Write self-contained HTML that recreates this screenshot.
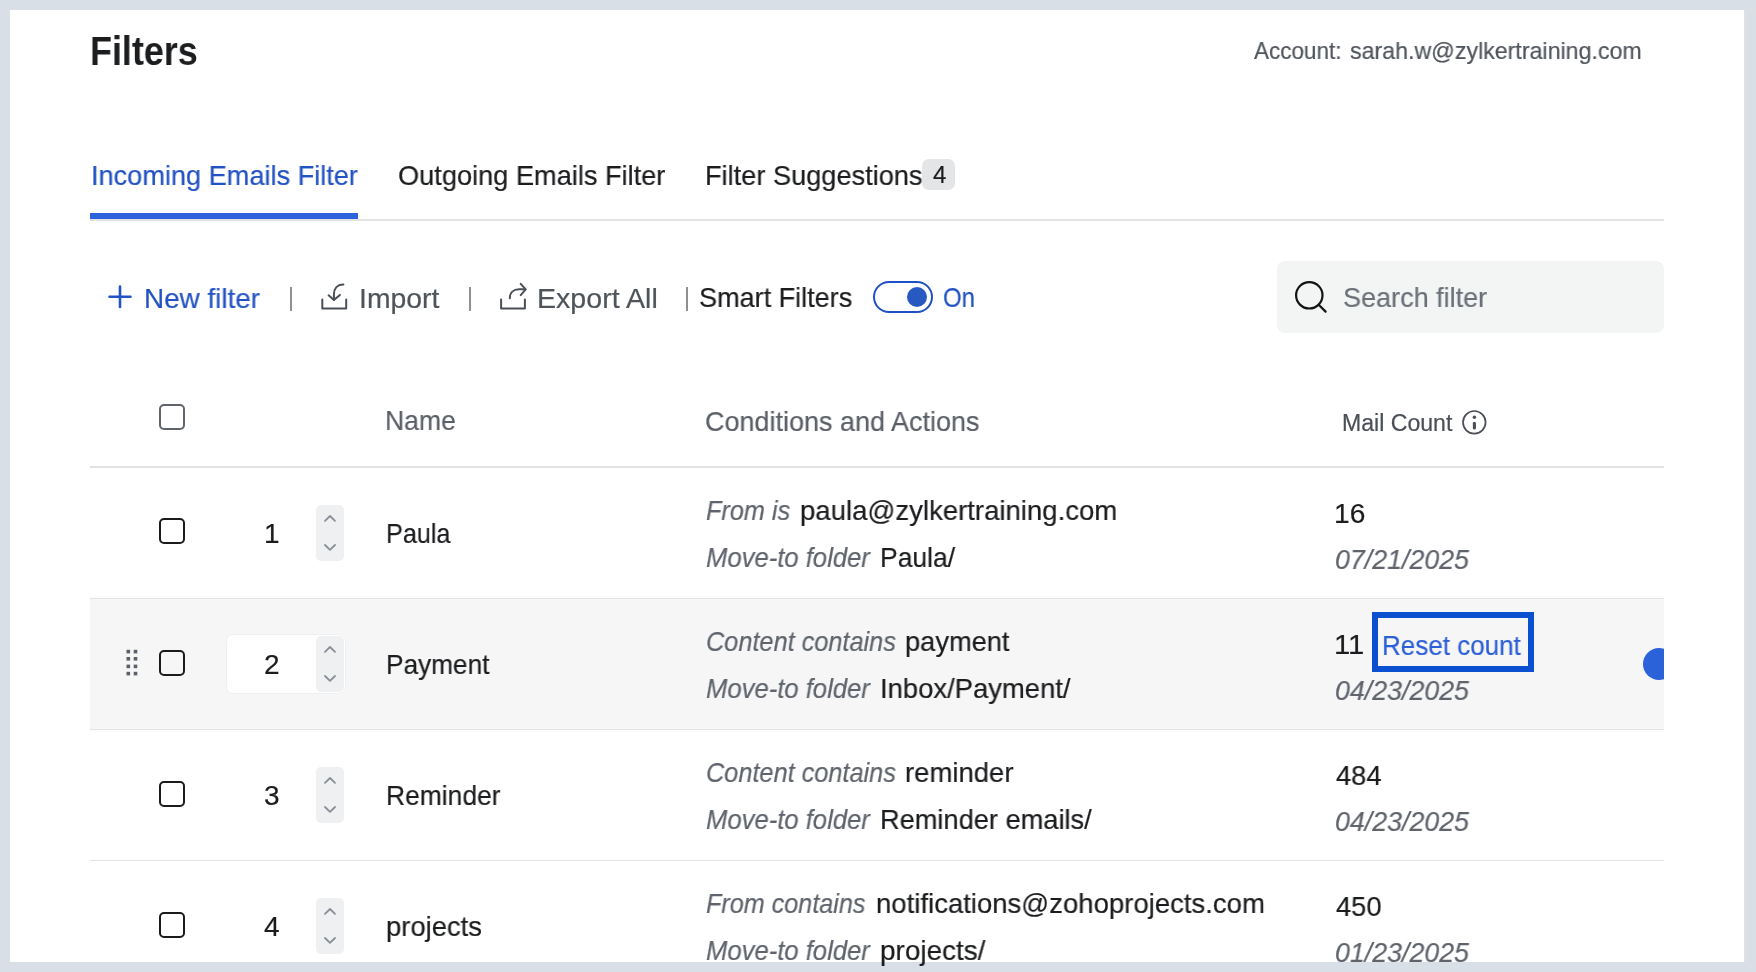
<!DOCTYPE html>
<html><head><meta charset="utf-8"><title>Filters</title>
<style>
html,body{margin:0;padding:0;}
body{width:1756px;height:972px;background:#d8dfe6;position:relative;overflow:hidden;font-family:"Liberation Sans",sans-serif;}
.panel{position:absolute;left:10px;top:10px;width:1734px;height:952px;background:#fff;border-right:2px solid #dfe1e5;}
.t{position:absolute;white-space:nowrap;line-height:1;transform-origin:0 0;will-change:transform;}
.a{position:absolute;}
.cb{position:absolute;left:159px;width:22px;height:22px;border:2px solid #1b1b1d;border-radius:5px;}
.step{position:absolute;left:316px;width:28px;height:56px;background:#eff0f2;border-radius:5px;}
.sep{position:absolute;top:287px;width:2px;height:24px;background:#8f9092;}
.rowline{position:absolute;left:90px;width:1574px;height:1px;background:#e2e3e6;}
svg{position:absolute;overflow:visible;}
</style></head><body>
<div class="panel"></div>

<div class="a" style="left:90px;top:219px;width:1574px;height:2px;background:#e1e3e5"></div>
<div class="a" style="left:90px;top:213px;width:268px;height:6px;background:#2d64db"></div>
<div class="a" style="left:922px;top:159px;width:33px;height:31px;border-radius:7px;background:#e4e5e7"></div>
<svg style="left:100px;top:280px" width="40" height="35" viewBox="0 0 40 35"><path d="M20 6.5V27M9.5 16.7H30.5" stroke="#2352c2" stroke-width="2.6" stroke-linecap="round" fill="none"/></svg>
<div class="sep" style="left:290px"></div>
<div class="sep" style="left:469px"></div>
<div class="sep" style="left:686px"></div>
<svg style="left:315px;top:278px" width="40" height="40" viewBox="0 0 40 40"><g stroke="#4a4f57" stroke-width="2" fill="none" stroke-linecap="round" stroke-linejoin="round"><path d="M7.3 21.4V30.5H31.2V21.4"/><path d="M28.4 6.4C22 6.4 18.9 11 18.9 16.5V21.8"/><path d="M13.6 17.3L18.9 22L24.9 16.9"/></g></svg>
<svg style="left:494px;top:278px" width="40" height="40" viewBox="0 0 40 40"><g stroke="#4a4f57" stroke-width="2" fill="none" stroke-linecap="round" stroke-linejoin="round"><path d="M7.1 21.4V30.5H30.9V21.4"/><path d="M15.8 20.2C15.8 14.5 19.5 11.3 25 11.3H31.3"/><path d="M26.7 5.8L31.7 11.3L26.7 17.1"/></g></svg>
<div class="a" style="left:873px;top:281px;width:56px;height:28px;border:2px solid #1f4fc4;border-radius:16px"></div>
<div class="a" style="left:907px;top:287px;width:20px;height:20px;border-radius:50%;background:#2859c0"></div>
<div class="a" style="left:1277px;top:261px;width:387px;height:72px;border-radius:8px;background:#f3f4f4"></div>
<svg style="left:1290px;top:277px" width="40" height="40" viewBox="0 0 40 40"><g stroke="#141414" stroke-width="2.2" fill="none" stroke-linecap="round"><circle cx="19.3" cy="18.3" r="13.2"/><path d="M29.2 28.2L35.6 34.6"/></g></svg>
<div class="cb" style="top:404px;border-color:#60656c"></div>
<svg style="left:1455px;top:405px" width="40" height="40" viewBox="0 0 40 40"><circle cx="19.3" cy="17.3" r="11.3" stroke="#4a4f57" stroke-width="1.7" fill="none"/><circle cx="19.4" cy="12.3" r="1.7" fill="#4a4f57"/><path d="M19.4 18.3V22.9" stroke="#4a4f57" stroke-width="3.1" stroke-linecap="round"/></svg>
<div class="a" style="left:90px;top:466px;width:1574px;height:2px;background:#e1e2e5"></div>
<div class="a" style="left:90px;top:599px;width:1574px;height:130px;background:#f6f6f7"></div>
<div class="rowline" style="top:598px"></div>
<div class="cb" style="top:518px"></div>
<div class="step" style="top:505px"></div>
<svg style="left:316px;top:505px" width="28" height="56" viewBox="0 0 28 56"><g stroke="#8a8e96" stroke-width="1.8" fill="none" stroke-linecap="round" stroke-linejoin="round"><path d="M9 15.9L14 11L19 15.9"/><path d="M9 40L14 44.9L19 40"/></g></svg>
<div class="rowline" style="top:729px"></div>
<div class="cb" style="top:650px"></div>
<div class="a" style="left:226px;top:634px;width:118px;height:58px;background:#fff;border:1px solid #f0f0f2;border-radius:7px"></div>
<div class="step" style="top:636px"></div>
<svg style="left:316px;top:636px" width="28" height="56" viewBox="0 0 28 56"><g stroke="#8a8e96" stroke-width="1.8" fill="none" stroke-linecap="round" stroke-linejoin="round"><path d="M9 15.9L14 11L19 15.9"/><path d="M9 40L14 44.9L19 40"/></g></svg>
<div class="rowline" style="top:860px"></div>
<div class="cb" style="top:781px"></div>
<div class="step" style="top:767px"></div>
<svg style="left:316px;top:767px" width="28" height="56" viewBox="0 0 28 56"><g stroke="#8a8e96" stroke-width="1.8" fill="none" stroke-linecap="round" stroke-linejoin="round"><path d="M9 15.9L14 11L19 15.9"/><path d="M9 40L14 44.9L19 40"/></g></svg>
<div class="cb" style="top:912px"></div>
<div class="step" style="top:898px"></div>
<svg style="left:316px;top:898px" width="28" height="56" viewBox="0 0 28 56"><g stroke="#8a8e96" stroke-width="1.8" fill="none" stroke-linecap="round" stroke-linejoin="round"><path d="M9 15.9L14 11L19 15.9"/><path d="M9 40L14 44.9L19 40"/></g></svg>
<svg style="left:124px;top:648px" width="16" height="30" viewBox="0 0 16 30"><rect x="2.5" y="1.8" width="3.6" height="3.6" fill="#5c6068"/><rect x="2.5" y="9.0" width="3.6" height="3.6" fill="#5c6068"/><rect x="2.5" y="16.6" width="3.6" height="3.6" fill="#5c6068"/><rect x="2.5" y="23.8" width="3.6" height="3.6" fill="#5c6068"/><rect x="9.7" y="1.8" width="3.6" height="3.6" fill="#5c6068"/><rect x="9.7" y="9.0" width="3.6" height="3.6" fill="#5c6068"/><rect x="9.7" y="16.6" width="3.6" height="3.6" fill="#5c6068"/><rect x="9.7" y="23.8" width="3.6" height="3.6" fill="#5c6068"/></svg>
<div class="a" style="left:1372px;top:612px;width:150px;height:48px;border:6px solid #0b50d0"></div>
<div class="a" style="left:1643px;top:648px;width:21px;height:32px;overflow:hidden"><div style="width:32px;height:32px;border-radius:50%;background:#2b62d9"></div></div>
<div class="t" style="left:90.21px;top:31.00px;font-size:40.0px;color:#1c1d1f;font-weight:bold;transform:scaleX(0.8974);">Filters</div>
<div class="t" style="left:1254.00px;top:38.80px;font-size:24.0px;color:#50555c;-webkit-text-stroke:0.2px currentColor;transform:scaleX(0.9370);">Account:</div>
<div class="t" style="left:1350.03px;top:38.80px;font-size:24.0px;color:#50555c;-webkit-text-stroke:0.2px currentColor;transform:scaleX(0.9667);">sarah.w@zylkertraining.com</div>
<div class="t" style="left:90.76px;top:162.00px;font-size:28.0px;color:#2352c2;-webkit-text-stroke:0.2px currentColor;transform:scaleX(0.9692);">Incoming Emails Filter</div>
<div class="t" style="left:397.83px;top:161.50px;font-size:28.0px;color:#1b1c1e;-webkit-text-stroke:0.2px currentColor;transform:scaleX(0.9708);">Outgoing Emails Filter</div>
<div class="t" style="left:705.06px;top:161.50px;font-size:28.0px;color:#1b1c1e;-webkit-text-stroke:0.2px currentColor;transform:scaleX(0.9706);">Filter Suggestions</div>
<div class="t" style="left:932.55px;top:162.70px;font-size:24.0px;color:#1b1c1e;-webkit-text-stroke:0.2px currentColor;">4</div>
<div class="t" style="left:144.41px;top:284.80px;font-size:28.0px;color:#2352c2;-webkit-text-stroke:0.2px currentColor;transform:scaleX(0.9948);">New filter</div>
<div class="t" style="left:358.97px;top:284.50px;font-size:28.0px;color:#4f545b;-webkit-text-stroke:0.2px currentColor;transform:scaleX(1.0130);">Import</div>
<div class="t" style="left:536.96px;top:284.50px;font-size:28.0px;color:#4f545b;-webkit-text-stroke:0.2px currentColor;transform:scaleX(1.0209);">Export All</div>
<div class="t" style="left:699.43px;top:284.00px;font-size:28.0px;color:#1b1c1e;-webkit-text-stroke:0.2px currentColor;transform:scaleX(0.9656);">Smart Filters</div>
<div class="t" style="left:943.14px;top:284.00px;font-size:28.0px;color:#2352c2;-webkit-text-stroke:0.2px currentColor;transform:scaleX(0.8571);">On</div>
<div class="t" style="left:1343.04px;top:284.00px;font-size:28.0px;color:#6b7079;-webkit-text-stroke:0.2px currentColor;transform:scaleX(0.9649);">Search filter</div>
<div class="t" style="left:385.14px;top:405.50px;font-size:28.5px;color:#5a5f67;-webkit-text-stroke:0.2px currentColor;transform:scaleX(0.9315);">Name</div>
<div class="t" style="left:705.04px;top:407.60px;font-size:28.0px;color:#5a5f67;-webkit-text-stroke:0.2px currentColor;transform:scaleX(0.9636);">Conditions and Actions</div>
<div class="t" style="left:1342.09px;top:411.70px;font-size:23.0px;color:#4a4f57;-webkit-text-stroke:0.2px currentColor;transform:scaleX(1.0037);">Mail Count</div>
<div class="t" style="left:263.50px;top:519.50px;font-size:28.0px;color:#1b1c1e;-webkit-text-stroke:0.2px currentColor;">1</div>
<div class="t" style="left:386.20px;top:519.50px;font-size:28.0px;color:#1b1c1e;-webkit-text-stroke:0.2px currentColor;transform:scaleX(0.9000);">Paula</div>
<div class="t" style="left:706.28px;top:496.70px;font-size:27.5px;color:#5f646c;font-style:italic;-webkit-text-stroke:0.2px currentColor;transform:scaleX(0.9178);">From is</div>
<div class="t" style="left:799.83px;top:496.70px;font-size:28.0px;color:#1b1c1e;-webkit-text-stroke:0.2px currentColor;transform:scaleX(0.9834);">paula@zylkertraining.com</div>
<div class="t" style="left:706.27px;top:543.70px;font-size:27.5px;color:#5f646c;font-style:italic;-webkit-text-stroke:0.2px currentColor;transform:scaleX(0.9324);">Move-to folder</div>
<div class="t" style="left:879.81px;top:543.70px;font-size:28.0px;color:#1b1c1e;-webkit-text-stroke:0.2px currentColor;transform:scaleX(0.9462);">Paula/</div>
<div class="t" style="left:1333.59px;top:499.50px;font-size:28.0px;color:#1b1c1e;-webkit-text-stroke:0.2px currentColor;transform:scaleX(1.0036);">16</div>
<div class="t" style="left:1334.63px;top:545.70px;font-size:27.5px;color:#5f646c;font-style:italic;-webkit-text-stroke:0.2px currentColor;transform:scaleX(0.9737);">07/21/2025</div>
<div class="t" style="left:263.65px;top:650.50px;font-size:28.0px;color:#1b1c1e;-webkit-text-stroke:0.2px currentColor;">2</div>
<div class="t" style="left:386.13px;top:650.50px;font-size:28.0px;color:#1b1c1e;-webkit-text-stroke:0.2px currentColor;transform:scaleX(0.9358);">Payment</div>
<div class="t" style="left:706.28px;top:627.70px;font-size:27.5px;color:#5f646c;font-style:italic;-webkit-text-stroke:0.2px currentColor;transform:scaleX(0.9200);">Content contains</div>
<div class="t" style="left:905.35px;top:627.70px;font-size:28.0px;color:#1b1c1e;-webkit-text-stroke:0.2px currentColor;transform:scaleX(0.9733);">payment</div>
<div class="t" style="left:706.27px;top:674.70px;font-size:27.5px;color:#5f646c;font-style:italic;-webkit-text-stroke:0.2px currentColor;transform:scaleX(0.9324);">Move-to folder</div>
<div class="t" style="left:879.74px;top:674.70px;font-size:28.0px;color:#1b1c1e;-webkit-text-stroke:0.2px currentColor;transform:scaleX(0.9793);">Inbox/Payment/</div>
<div class="t" style="left:1333.51px;top:630.50px;font-size:28.0px;color:#1b1c1e;-webkit-text-stroke:0.2px currentColor;transform:scaleX(1.0462);">11</div>
<div class="t" style="left:1334.63px;top:676.70px;font-size:27.5px;color:#5f646c;font-style:italic;-webkit-text-stroke:0.2px currentColor;transform:scaleX(0.9737);">04/23/2025</div>
<div class="t" style="left:264.00px;top:781.50px;font-size:28.0px;color:#1b1c1e;-webkit-text-stroke:0.2px currentColor;">3</div>
<div class="t" style="left:386.11px;top:781.50px;font-size:28.0px;color:#1b1c1e;-webkit-text-stroke:0.2px currentColor;transform:scaleX(0.9437);">Reminder</div>
<div class="t" style="left:706.28px;top:758.70px;font-size:27.5px;color:#5f646c;font-style:italic;-webkit-text-stroke:0.2px currentColor;transform:scaleX(0.9200);">Content contains</div>
<div class="t" style="left:904.84px;top:758.70px;font-size:28.0px;color:#1b1c1e;-webkit-text-stroke:0.2px currentColor;transform:scaleX(0.9817);">reminder</div>
<div class="t" style="left:706.27px;top:805.70px;font-size:27.5px;color:#5f646c;font-style:italic;-webkit-text-stroke:0.2px currentColor;transform:scaleX(0.9324);">Move-to folder</div>
<div class="t" style="left:879.76px;top:805.70px;font-size:28.0px;color:#1b1c1e;-webkit-text-stroke:0.2px currentColor;transform:scaleX(0.9718);">Reminder emails/</div>
<div class="t" style="left:1335.60px;top:761.50px;font-size:28.0px;color:#1b1c1e;-webkit-text-stroke:0.2px currentColor;transform:scaleX(0.9739);">484</div>
<div class="t" style="left:1334.63px;top:807.70px;font-size:27.5px;color:#5f646c;font-style:italic;-webkit-text-stroke:0.2px currentColor;transform:scaleX(0.9737);">04/23/2025</div>
<div class="t" style="left:264.00px;top:912.50px;font-size:28.0px;color:#1b1c1e;-webkit-text-stroke:0.2px currentColor;">4</div>
<div class="t" style="left:386.04px;top:912.50px;font-size:28.0px;color:#1b1c1e;-webkit-text-stroke:0.2px currentColor;transform:scaleX(0.9789);">projects</div>
<div class="t" style="left:706.28px;top:889.70px;font-size:27.5px;color:#5f646c;font-style:italic;-webkit-text-stroke:0.2px currentColor;transform:scaleX(0.9150);">From contains</div>
<div class="t" style="left:875.73px;top:889.70px;font-size:28.0px;color:#1b1c1e;-webkit-text-stroke:0.2px currentColor;transform:scaleX(0.9827);">notifications@zohoprojects.com</div>
<div class="t" style="left:706.27px;top:936.70px;font-size:27.5px;color:#5f646c;font-style:italic;-webkit-text-stroke:0.2px currentColor;transform:scaleX(0.9324);">Move-to folder</div>
<div class="t" style="left:879.71px;top:936.70px;font-size:28.0px;color:#1b1c1e;-webkit-text-stroke:0.2px currentColor;transform:scaleX(0.9962);">projects/</div>
<div class="t" style="left:1335.60px;top:892.50px;font-size:28.0px;color:#1b1c1e;-webkit-text-stroke:0.2px currentColor;transform:scaleX(0.9739);">450</div>
<div class="t" style="left:1334.63px;top:938.70px;font-size:27.5px;color:#5f646c;font-style:italic;-webkit-text-stroke:0.2px currentColor;transform:scaleX(0.9737);">01/23/2025</div>
<div class="t" style="left:1382.31px;top:632.00px;font-size:27.5px;color:#2b5fd6;-webkit-text-stroke:0.2px currentColor;transform:scaleX(0.9462);">Reset count</div>
</body></html>
